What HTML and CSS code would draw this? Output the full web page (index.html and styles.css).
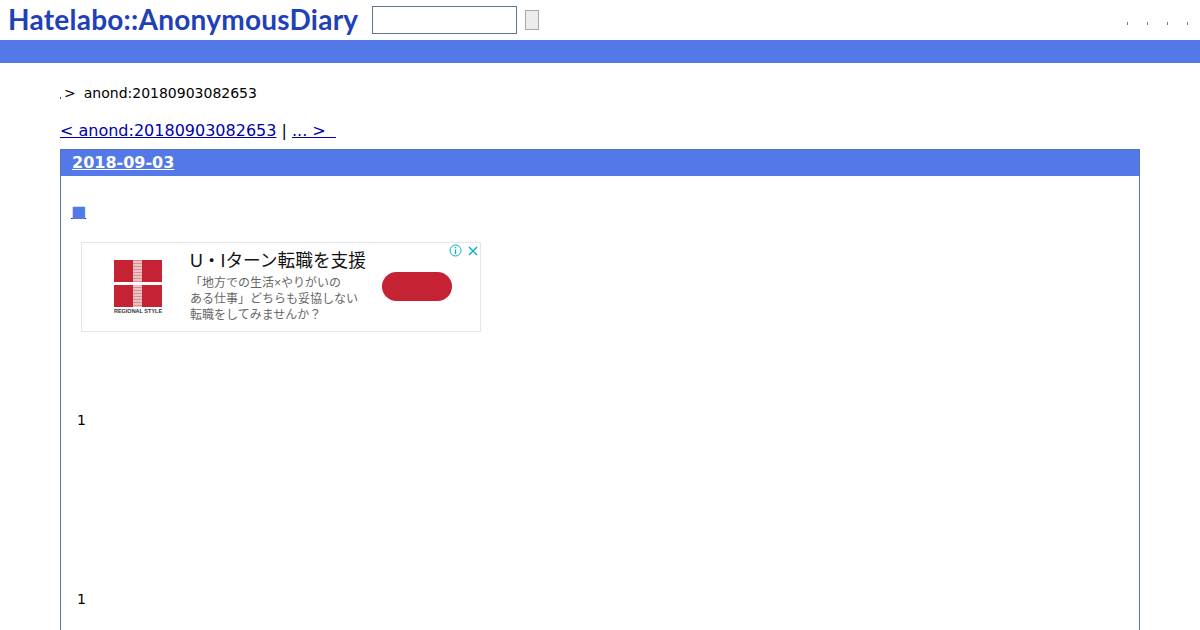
FILE: index.html
```html
<!DOCTYPE html>
<html>
<head>
  <meta charset='utf-8'>
  <title>anond:20180903082653</title>
  <link rel="stylesheet" href="styles.css">
</head>
<body>
  <header id="top">
    <h1 class="logo">Hatelabo::AnonymousDiary</h1>
    <form class="search">
      <input type="text" class="search-text">
      <button type="button" class="search-btn"></button>
    </form>
    <ul class="menu">
      <li></li><li></li><li></li><li></li>
    </ul>
  </header>
  <div class="bar"></div>
  <section id="main">
    <p class="crumb"><span class="dot"></span>&gt;<span class="crumb-id">anond:20180903082653</span></p>
    <p class="pager"><a href="#">&lt; anond:20180903082653</a> | <a href="#">... &gt;&nbsp;&nbsp;</a></p>
    <div class="day">
      <h2 class="day-title"><a href="#">2018-09-03</a></h2>
      <div class="body">
        <h3 class="sect"><a href="#">■</a></h3>
        <div class="ad">
          <div class="ad-logo">
            <svg width="48" height="47" viewBox="0 0 48 47">
              <defs>
                <pattern id="stripes" width="9" height="3" patternUnits="userSpaceOnUse">
                  <rect width="9" height="3" fill="#e9c3c6"/>
                  <rect width="9" height="1" fill="#d98e94"/>
                </pattern>
              </defs>
              <rect width="48" height="22" fill="#c52234"/>
              <rect y="25" width="48" height="22" fill="#c52234"/>
              <rect x="19" width="9" height="22" fill="url(#stripes)"/>
              <rect x="19" y="25" width="9" height="22" fill="url(#stripes)"/>
            </svg>
            <span class="ad-brand">REGIONAL STYLE</span>
          </div>
          <div class="ad-copy">
            <div class="ad-head">U・Iターン転職を支援</div>
            <div class="ad-text">「地方での生活×やりがいの<br>ある仕事」どちらも妥協しない<br>転職をしてみませんか？</div>
          </div>
          <div class="ad-cta"></div>
          <div class="ad-icons">
            <svg width="13" height="13" viewBox="0 0 13 13" fill="none" stroke="#00aecd">
              <circle cx="6.5" cy="6.5" r="5.5"/>
              <path d="M6.5 5.5v4.5M6.5 3v1.3" stroke-width="1.3"/>
            </svg>
            <svg width="10" height="10" viewBox="0 0 10 10" fill="none" stroke="#00aecd" stroke-width="1.3">
              <path d="M1 1l8 8M9 1l-8 8"/>
            </svg>
          </div>
        </div>
        <p class="num num-first">1</p>
        <p class="num num-second">1</p>
      </div>
    </div>
  </section>
</body>
</html>
```

FILE: styles.css
```css
*, *:before, *:after {
  box-sizing: border-box;
}
html, body {
  margin: 0;
  padding: 0;
  background: #fff;
  color: #000;
  font-family: "DejaVu Sans", sans-serif;
  height: 630px;
  overflow: hidden;
}
a {
  color: #0000a8;
}
#top {
  height: 40px;
  display: flex;
  align-items: center;
  padding-left: 8px;
}
.logo {
  margin: 0 0 2px;
  width: 364px;
  font-family: Lato, sans-serif;
  font-size: 28px;
  font-weight: 700;
  letter-spacing: .25px;
  color: #1f41b8;
  line-height: 38px;
  white-space: nowrap;
}
.search {
  display: flex;
  align-items: center;
  gap: 8px;
}
.search-text {
  width: 145px;
  height: 28px;
  margin: 0;
  padding: 0;
  background: #fff;
  border: 1px solid #5f7590;
}
.search-btn {
  width: 14px;
  height: 20px;
  padding: 0;
  background: #ececec;
  border: 1px solid #a8a8a8;
}
.menu {
  list-style: none;
  display: flex;
  gap: 19px;
  margin: 6px 12px 0 auto;
  padding: 0;
}
.menu li {
  width: 1px;
  height: 3px;
  background: #777;
}
.bar {
  height: 23px;
  background: #5279e7;
}
#main {
  padding: 0 60px;
}
.crumb {
  margin: 0;
  padding-top: 21px;
  font-size: 14px;
  line-height: 18px;
  display: flex;
  align-items: center;
}
.dot {
  width: 1px;
  height: 2px;
  margin: 9px 3px 0 0;
  background: #555;
}
.crumb-id {
  margin-left: 8px;
}
.pager {
  margin: 0;
  padding-top: 19px;
  font-size: 16px;
  line-height: 19px;
  height: 47px;
}
.day {
  border: 1px solid #5a74b0;
  border-bottom: none;
  height: 481px;
}
.day-title {
  margin: 0;
  height: 26px;
  padding-left: 11px;
  background: #5279e7;
  font-size: 16px;
  line-height: 26px;
}
.day-title a {
  color: #fff;
}
.body {
  padding-left: 10px;
}
.sect {
  margin: 0;
  padding-top: 26px;
  font-size: 16px;
  font-weight: normal;
  line-height: 19px;
}
.sect a {
  color: #5279e7;
  text-decoration-color: #1f3a9a;
}
.ad {
  position: relative;
  display: flex;
  align-items: center;
  width: 400px;
  height: 90px;
  margin: 21px 0 0 10px;
  border: 1px solid #e6e6e6;
  font-family: "Liberation Sans", "Noto Sans CJK JP", sans-serif;
}
.ad-logo {
  width: 108px;
  display: flex;
  flex-direction: column;
  align-items: center;
  padding: 0 0 0 4px;
  flex-shrink: 0;
}
.ad-logo svg {
  display: block;
}
.ad-brand {
  font-size: 5.5px;
  font-weight: 700;
  color: #333;
  margin-top: 1px;
  white-space: nowrap;
}
.ad-copy {
  width: 192px;
  flex-shrink: 0;
  padding-bottom: 2px;
}
.ad-head {
  font-size: 17.7px;
  line-height: 24px;
  color: #111;
  white-space: nowrap;
}
.ad-text {
  margin-top: 2px;
  font-size: 12px;
  line-height: 16px;
  color: #666;
  white-space: nowrap;
}
.ad-cta {
  width: 70px;
  height: 29px;
  margin-bottom: 2px;
  border-radius: 15px;
  background: #c52234;
}
.ad-icons {
  position: absolute;
  top: 1px;
  right: 2px;
  display: flex;
  align-items: center;
  gap: 6px;
}
.ad-icons svg {
  display: block;
}
.num {
  margin: 0;
  padding-left: 6px;
  font-size: 14px;
  line-height: 18px;
}
.num-first {
  margin-top: 79px;
}
.num-second {
  margin-top: 161px;
}
```
